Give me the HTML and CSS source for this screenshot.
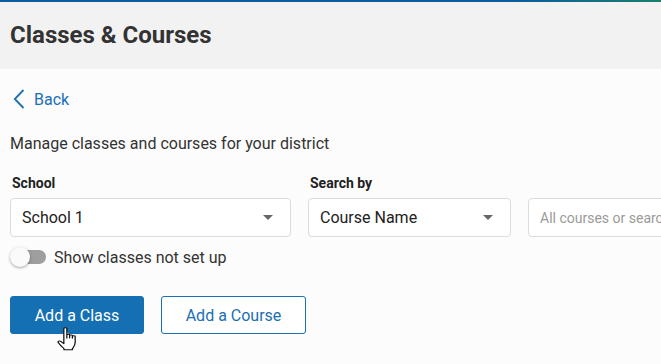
FILE: index.html
```html
<!DOCTYPE html>
<html>
<head>
<meta charset="utf-8">
<link rel="stylesheet" href="styles.css">
</head>
<body>
<div class="topline"></div>
<header class="header"><h1 class="title">Classes &amp; Courses</h1></header>
<main class="main">
  <a class="back" href="#">
    <svg class="chev" width="12" height="20" viewBox="0 0 12 20"><path d="M10.5 1 L1.8 10 L10.5 19" fill="none" stroke="#1a6fb5" stroke-width="1.8"/></svg>
    <span>Back</span>
  </a>
  <p class="desc">Manage classes and courses for your district</p>
  <div class="filters">
    <div class="field f-school">
      <label class="lbl">School</label>
      <div class="select"><span>School 1</span><span class="caret"></span></div>
    </div>
    <div class="field f-search">
      <label class="lbl">Search by</label>
      <div class="select"><span>Course Name</span><span class="caret"></span></div>
    </div>
    <div class="field f-input">
      <label class="lbl">&nbsp;</label>
      <div class="input"><span class="ph">All courses or search by name</span></div>
    </div>
  </div>
  <div class="toggle-row">
    <span class="toggle"><span class="track"></span><span class="knob"></span></span>
    <span class="toggle-text">Show classes not set up</span>
  </div>
  <div class="actions">
    <button class="btn primary">Add a Class</button>
    <button class="btn outline">Add a Course</button>
    <svg class="cursor" width="19" height="24" viewBox="0.6 0.4 16.4 27.4" preserveAspectRatio="none"><path d="M6.5 2.2c0-1.3 2.6-1.3 2.6 0v11 M9.1 12.5v-3c0-1.2 2.4-1.2 2.4 0v3.4 M11.5 12.5v-2.2c0-1.2 2.4-1.2 2.4 0v3 M13.9 12.8v-1.6c0-1.2 2.4-1.2 2.4 0v6.6c0 3.6-1.6 6-2.4 7.4v1.2H6.6v-1.4c-1.4-1.6-3.6-4.4-4.8-6.6-.8-1.4.8-2.8 2-1.6l2.7 2.6V2.2" fill="#fff" stroke="#111" stroke-width="1.1" stroke-linejoin="round" stroke-linecap="round"/></svg>
  </div>
</main>
</body>
</html>
```
FILE: styles.css
```css
* { box-sizing: border-box; }
html, body { margin: 0; padding: 0; }
body { background: #fcfcfc; font-family: Roboto, "Liberation Sans", sans-serif; color: #333; width: 661px; height: 364px; overflow: hidden; }
.topline { height: 2px; background: linear-gradient(90deg, #0b5c9e 0%, #0b5c9e 78%, #1c7f6e 100%); }
.header { height: 67px; background: #f2f2f2; display: flex; align-items: center; padding: 0 10px; }
.title { margin: 0; font-size: 24px; font-weight: 700; color: #333; padding-bottom: 2px; }
.main { padding: 0 0 0 10px; }
.back { display: flex; align-items: center; gap: 9px; text-decoration: none; color: #1a6fb5; font-size: 16px; margin-top: 19px; height: 22px; padding-left: 3px; }
.desc { margin: 24px 0 0; font-size: 16px; color: #333; line-height: 19px; }
.filters { display: flex; gap: 17px; margin-top: 22px; overflow: hidden; }
.field { display: flex; flex-direction: column; flex-shrink: 0; }
.lbl { font-size: 14px; font-weight: 700; color: #222; line-height: 16px; height: 16px; padding-left: 2px; margin-bottom: 7px; }
.f-school { width: 281px; }
.f-search { width: 203px; }
.f-input { width: 200px; }
.select, .input { height: 39px; border: 1px solid #dcdcdc; border-radius: 4px; background: #fff; display: flex; align-items: center; justify-content: space-between; padding: 0 17px 0 11px; font-size: 16px; color: #222; }
.input { justify-content: flex-start; white-space: nowrap; overflow: hidden; padding-left: 11px; }
.ph { font-size: 14px; color: #9a9a9a; }
.caret { width: 0; height: 0; border-left: 5px solid transparent; border-right: 5px solid transparent; border-top: 5px solid #666; }
.toggle-row { display: flex; align-items: center; gap: 8px; margin-top: 9px; height: 22px; }
.toggle { position: relative; width: 36px; height: 20px; display: block; }
.track { position: absolute; left: 2px; top: 3px; width: 34px; height: 14px; border-radius: 7px; background: #9e9e9e; }
.knob { position: absolute; left: 0; top: 0; width: 20px; height: 20px; border-radius: 50%; background: #fafafa; box-shadow: 0 1px 3px rgba(0,0,0,0.35); }
.toggle-text { font-size: 16px; color: #333; }
.actions { position: relative; display: flex; gap: 17px; margin-top: 28px; }
.btn { height: 38px; border-radius: 3px; font-family: Roboto, "Liberation Sans", sans-serif; font-size: 16px; padding: 0; }
.primary { width: 134px; background: #156fb3; color: #fff; border: 1px solid #156fb3; }
.outline { width: 145px; background: #fff; color: #1a6fb5; border: 1px solid #1a6fb5; }
.cursor { position: absolute; left: 47px; top: 31px; }
```
